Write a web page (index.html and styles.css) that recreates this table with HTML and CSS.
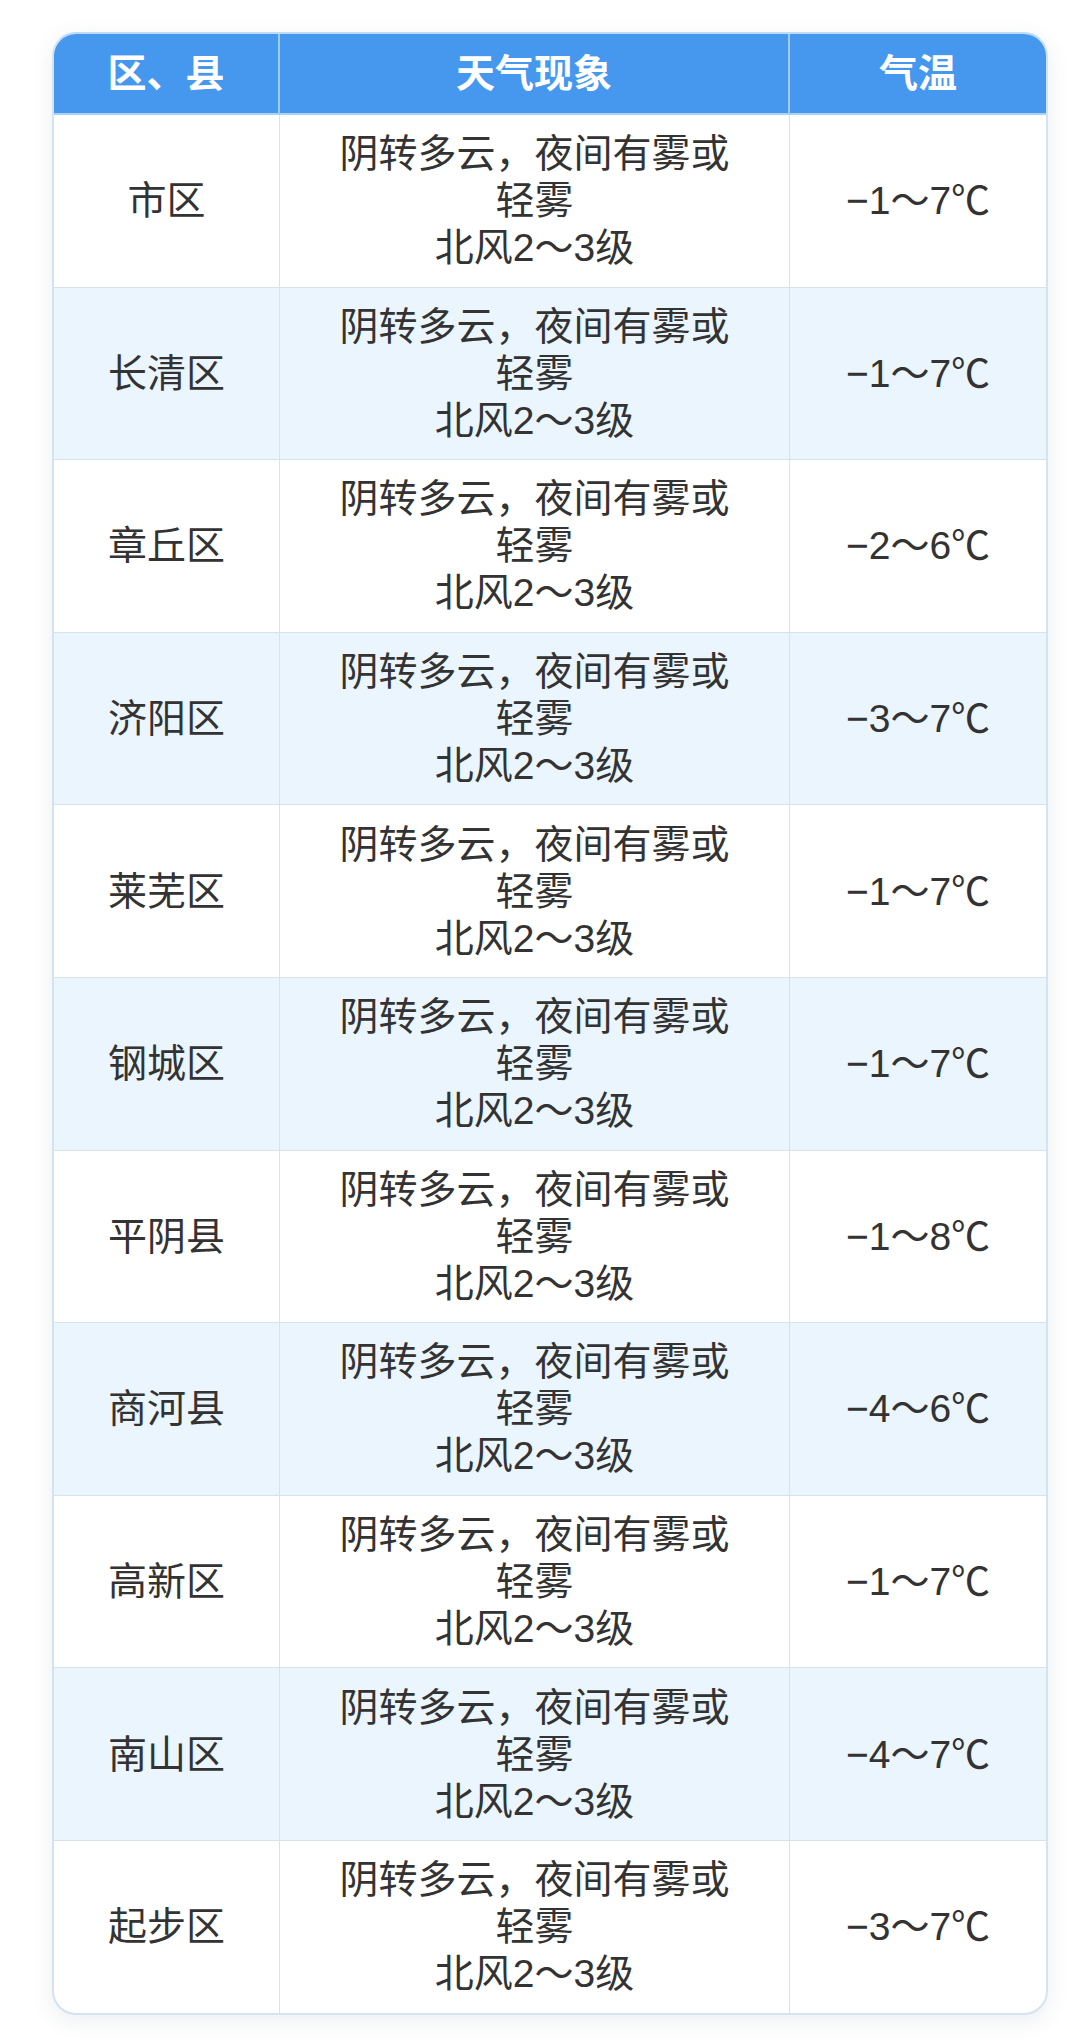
FILE: index.html
```html
<!DOCTYPE html>
<html lang="zh-CN">
<head>
<meta charset="utf-8">
<title>天气预报</title>
<link rel="stylesheet" href="styles.css">
</head>
<body>
<div class="page">
  <div class="card">
    <table class="weather">
      <colgroup>
        <col class="c1">
        <col class="c2">
        <col class="c3">
      </colgroup>
      <thead>
        <tr><th>区、县</th><th>天气现象</th><th>气温</th></tr>
      </thead>
      <tbody>
        <tr><td>市区</td><td>阴转多云，夜间有雾或<br>轻雾<br>北风2～3级</td><td>−1～7℃</td></tr>
        <tr><td>长清区</td><td>阴转多云，夜间有雾或<br>轻雾<br>北风2～3级</td><td>−1～7℃</td></tr>
        <tr><td>章丘区</td><td>阴转多云，夜间有雾或<br>轻雾<br>北风2～3级</td><td>−2～6℃</td></tr>
        <tr><td>济阳区</td><td>阴转多云，夜间有雾或<br>轻雾<br>北风2～3级</td><td>−3～7℃</td></tr>
        <tr><td>莱芜区</td><td>阴转多云，夜间有雾或<br>轻雾<br>北风2～3级</td><td>−1～7℃</td></tr>
        <tr><td>钢城区</td><td>阴转多云，夜间有雾或<br>轻雾<br>北风2～3级</td><td>−1～7℃</td></tr>
        <tr><td>平阴县</td><td>阴转多云，夜间有雾或<br>轻雾<br>北风2～3级</td><td>−1～8℃</td></tr>
        <tr><td>商河县</td><td>阴转多云，夜间有雾或<br>轻雾<br>北风2～3级</td><td>−4～6℃</td></tr>
        <tr><td>高新区</td><td>阴转多云，夜间有雾或<br>轻雾<br>北风2～3级</td><td>−1～7℃</td></tr>
        <tr><td>南山区</td><td>阴转多云，夜间有雾或<br>轻雾<br>北风2～3级</td><td>−4～7℃</td></tr>
        <tr><td>起步区</td><td>阴转多云，夜间有雾或<br>轻雾<br>北风2～3级</td><td>−3～7℃</td></tr>
      </tbody>
    </table>
  </div>
</div>
</body>
</html>
```

FILE: styles.css
```css
html, body {
  margin: 0;
  padding: 0;
  background: #ffffff;
}

.page {
  padding: 32px 0 40px 52px;
}

.card {
  width: 996px;
  box-sizing: border-box;
  border: 2px solid #d3e3ef;
  border-top-color: #bcdcf8;
  border-radius: 24px;
  overflow: hidden;
  background: #ffffff;
  box-shadow: 0 6px 22px rgba(70, 90, 110, 0.10);
}

.weather {
  width: 100%;
  table-layout: fixed;
  border-collapse: separate;
  border-spacing: 0;
  font-family: "Liberation Sans", "Noto Sans CJK SC", sans-serif;
  color: #333333;
}

.c1 { width: 226px; }
.c2 { width: 510px; }
.c3 { width: auto; }

.weather th {
  height: 79px;
  padding: 0;
  background: #4697ee;
  color: #ffffff;
  font-size: 39px;
  font-weight: 700;
  line-height: 1;
  text-align: center;
  vertical-align: middle;
  border-bottom: 2px solid #a8d3f8;
  border-right: 2px solid #9fcaf3;
}

.weather th:last-child,
.weather td:last-child {
  border-right: none;
}

.weather td {
  padding: 15.3px 8px;
  font-size: 39px;
  line-height: 47px;
  text-align: center;
  vertical-align: middle;
  border-bottom: 1.5px solid #d6e3ed;
  border-right: 1.5px solid #d6e3ed;
}

.weather tbody tr:last-child td {
  border-bottom: none;
}

.weather tbody tr:nth-child(even) td {
  background: #ebf5fe;
}
```
